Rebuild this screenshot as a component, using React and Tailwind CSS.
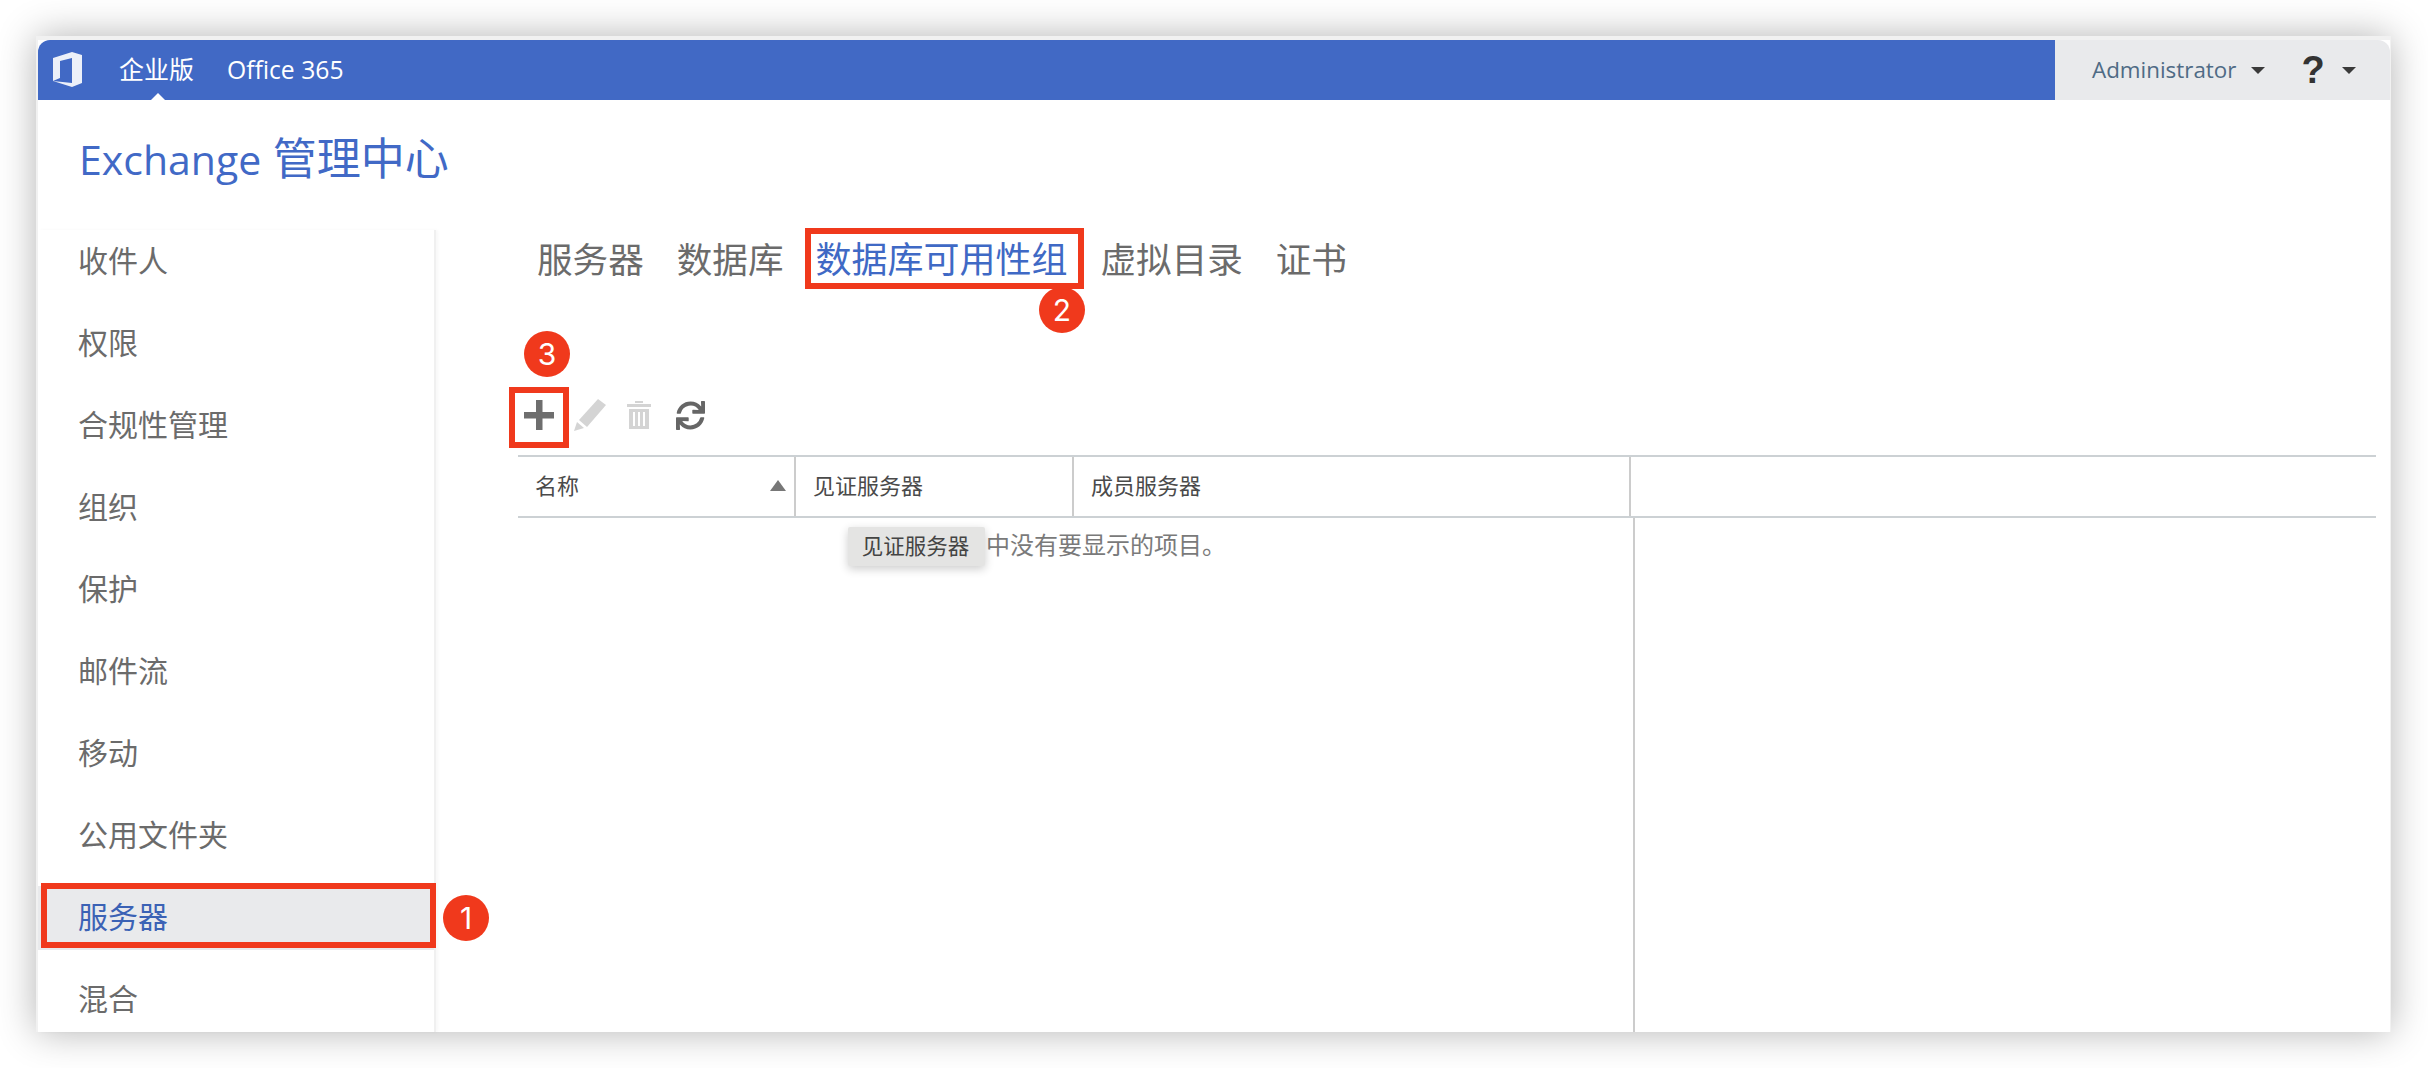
import React from "react";
import { FaSync } from "react-icons/fa";

const FONT = "font-['Open_Sans','Noto_Sans_CJK_SC',sans-serif]";

const NAV_ITEMS = ["收件人", "权限", "合规性管理", "组织", "保护", "邮件流", "移动", "公用文件夹", "服务器", "混合"];
const TABS = ["服务器", "数据库", "数据库可用性组", "虚拟目录", "证书"];

function Caret({ className }) {
    return <span className={`block w-0 h-0 border-l-[7px] border-r-[7px] border-t-[7px] border-l-transparent border-r-transparent border-t-[#3a3a3a] ${className}`} />;
}

function OfficeLogo() {
    return (
        <svg width="32" height="36" viewBox="0 0 32 36" fill="#fff" className="opacity-90">
            <path d="M0 6 L19 0 L29 3 L29 31 L19 35 L0 29 L19 31 L19 6 L7 9 L7 26 L0 29 Z" />
        </svg>
    );
}

function PencilIcon() {
    return (
        <svg width="32" height="32" viewBox="0 0 32 32" fill="#d4d4d4">
            <path d="M24 0 L32 6 L13 28 L5 21 Z" />
            <path d="M0 32 L3 23 L10 29 Z" />
        </svg>
    );
}

function TrashIcon() {
    return (
        <svg width="24" height="28" viewBox="0 0 24 28" fill="#d4d4d4">
            <rect x="8" y="0" width="8" height="2" />
            <rect x="0" y="3" width="24" height="3" />
            <path d="M2 8 H22 V28 H2 Z M6 11 V25 H8 V11 Z M11 11 V25 H13 V11 Z M16 11 V25 H18 V11 Z" fillRule="evenodd" />
        </svg>
    );
}

function Badge({ n, className }) {
    return (
        <div className={`absolute w-[46px] h-[46px] rounded-full bg-[#f0391c] text-white flex items-center justify-center text-[30px] font-['Inter',sans-serif] ${className}`}>
            {n}
        </div>
    );
}

function RedBox({ className }) {
    return <div className={`absolute border-[6px] border-[#f0391c] ${className}`} />;
}

export default function App() {
    return (
        <div className={`relative w-[2428px] h-[1068px] overflow-hidden bg-white pt-[36px] pl-[36px] ${FONT}`}>
            {/* Window */}
            <div className="w-[2355px] h-[996px] bg-white flex flex-col border-t-4 border-l-2 border-r border-[#f1f1f1] shadow-[0_0_36px_rgba(0,0,0,0.3)]">
                {/* Top bar */}
                <div className="h-[60px] flex shrink-0">
                    <div className="relative w-[2017px] bg-[#4169c5] rounded-tl-[12px] flex items-center text-white text-[25px] pl-[15px]">
                        <OfficeLogo />
                        <span className="ml-[34px]">企业版</span>
                        <span className="ml-[33px] text-[24.7px]">Office 365</span>
                        <span className="absolute left-[113px] bottom-0 w-0 h-0 border-l-[7px] border-r-[7px] border-b-[7px] border-l-transparent border-r-transparent border-b-white" />
                    </div>
                    <div className="flex-1 bg-[#e9eaec] rounded-tr-[12px] flex items-center pl-[37px]">
                        <span className="text-[22.4px] text-[#4f6b85]">Administrator</span>
                        <Caret className="ml-[15px]" />
                        <span className="ml-[36px] text-[38px] leading-none font-bold text-[#333] font-['Liberation_Sans',sans-serif]">?</span>
                        <Caret className="ml-[17px]" />
                    </div>
                </div>

                {/* Title */}
                <div className="h-[130px] shrink-0 pl-[41px] pt-[29px] text-[44px] leading-[58px] text-[#4169c6]">
                    <span className="text-[41px]">Exchange</span> 管理中心
                </div>

                {/* Body */}
                <div className="flex-1 flex min-h-0">
                    <div className="w-[398px] shrink-0 flex flex-col gap-[18px] border-r-2 border-[#f0f0f0] shadow-[2px_0_3px_rgba(0,0,0,0.03)]">
                        {NAV_ITEMS.map((item) => (
                            <div
                                key={item}
                                className={`h-[64px] shrink-0 pl-[40px] pb-[3px] flex items-center text-[30px] ${item === "服务器" ? "bg-[#e9eaec] text-[#3b62b5]" : "text-[#6b6b6b]"}`}
                            >
                                {item}
                            </div>
                        ))}
                    </div>

                    <div className="flex-1 flex flex-col min-w-0">
                        {/* Tabs */}
                        <div className="h-[60px] shrink-0 flex items-center gap-[33px] pl-[101px] text-[35.6px] text-[#6b6b6b]">
                            {TABS.map((tab) => (
                                <span key={tab} className={tab === "数据库可用性组" ? "text-[#3f69c5] text-[36px] -ml-[1px]" : ""}>{tab}</span>
                            ))}
                        </div>

                        {/* Toolbar */}
                        <div className="h-[30px] shrink-0 mt-[110px] pl-[88px] flex items-center">
                            <svg width="30" height="30" viewBox="0 0 30 30" fill="#6e6e6e">
                                <rect x="12" y="0" width="6.5" height="30" />
                                <rect x="0" y="12" width="30" height="6.5" />
                            </svg>
                            <span className="ml-[20px]"><PencilIcon /></span>
                            <span className="ml-[21px]"><TrashIcon /></span>
                            <FaSync className="ml-[25px] text-[#666666]" size={29} />
                        </div>

                        {/* Table */}
                        <div className="mt-[25px] ml-[82px] mr-[14px] flex-1 flex flex-col min-h-0 relative">
                            <div className="h-[63px] shrink-0 flex border-y-2 border-[#ccd1d4] text-[22px] text-[#4a4a4a]">
                                <div className="w-[278px] flex items-center justify-between pl-[17px] pr-[8px] pb-[2px] border-r-2 border-[#cccccc]">
                                    <span>名称</span>
                                    <span className="w-0 h-0 border-l-[8px] border-r-[8px] border-b-[11px] border-l-transparent border-r-transparent border-b-[#777777]" />
                                </div>
                                <div className="w-[278px] flex items-center pl-[17px] pb-[2px] border-r-2 border-[#cccccc]">见证服务器</div>
                                <div className="w-[557px] flex items-center pl-[17px] pb-[2px] border-r-2 border-[#cccccc]">成员服务器</div>
                            </div>
                            <div className="flex-1 flex min-h-0">
                                <div className="w-[1117px] shrink-0 border-r-2 border-[#cccccc] pl-[468px] pt-[11px] text-[24px] leading-[32px] text-[#7a7a7a]">
                                    中没有要显示的项目。
                                </div>
                            </div>
                            {/* Tooltip */}
                            <div className="absolute left-[330px] top-[72px] w-[137px] h-[39px] pr-[2px] bg-[#e4e4e3] rounded-[2px] flex items-center justify-center text-[21.5px] text-[#444444] shadow-[0_3px_10px_rgba(0,0,0,0.2)]">
                                见证服务器
                            </div>
                        </div>
                    </div>
                </div>
            </div>

            {/* Annotations */}
            <RedBox className="left-[41px] top-[883px] w-[395px] h-[65px]" />
            <Badge n="1" className="left-[443px] top-[895px]" />
            <RedBox className="left-[805px] top-[228px] w-[279px] h-[61px]" />
            <Badge n="2" className="left-[1039px] top-[287px]" />
            <RedBox className="left-[509px] top-[387px] w-[60px] h-[61px]" />
            <Badge n="3" className="left-[524px] top-[331px]" />
        </div>
    );
}
